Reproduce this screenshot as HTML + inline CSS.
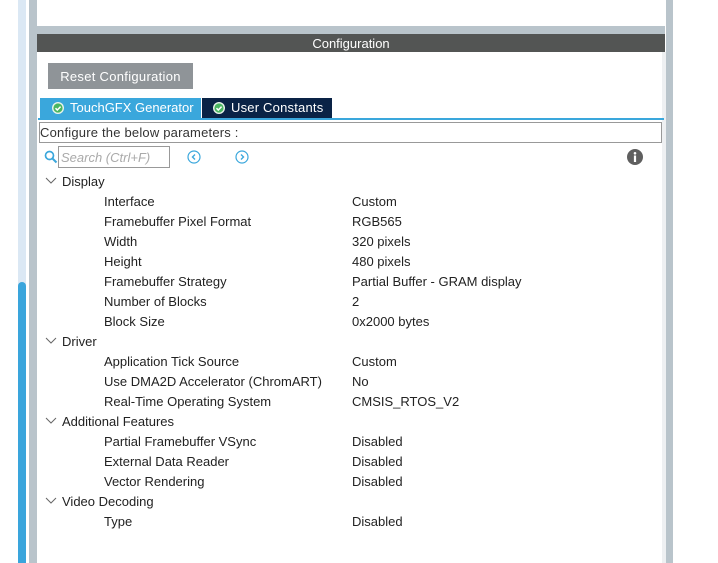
<!DOCTYPE html>
<html><head><style>
body{margin:0;width:718px;height:563px;background:#fff;position:relative;overflow:hidden;font-family:"Liberation Sans",Arial,sans-serif;font-size:13px;color:#222}
.a{position:absolute}
.row{position:absolute;left:0;width:600px;height:20px;line-height:20px}
.cat{left:62px}
.k{position:absolute;left:104px}
.v{position:absolute;left:352px}
.chev{position:absolute;left:45px;top:4px}
</style></head><body>
<div class="a" style="left:18px;top:0;width:8px;height:563px;background:#dbe8f4"></div>
<div class="a" style="left:18px;top:282px;width:8px;height:281px;background:#3aa5dc;border-radius:4px 4px 0 0"></div>
<div class="a" style="left:29px;top:0;width:8px;height:563px;background:#b9c4cb"></div>
<div class="a" style="left:37px;top:26px;width:628px;height:8px;background:#b9c4cb"></div>
<div class="a" style="left:662px;top:52px;width:4px;height:511px;background:#eef0f2"></div>
<div class="a" style="left:666px;top:0;width:7px;height:563px;background:#b9c4cb"></div>
<div class="a" style="left:37px;top:34px;width:628px;height:18px;background:#535554;color:#fff;text-align:center;line-height:19px;font-size:13px">Configuration</div>
<div class="a" style="left:48px;top:63px;width:145px;height:26px;background:#8f9498;color:#fff;text-align:center;line-height:27px;font-size:13px;letter-spacing:.3px">Reset Configuration</div>
<div class="a" style="left:40px;top:98px;width:161px;height:20px;background:#3aa7dc;color:#fff;line-height:20px;font-size:13px">
<svg class="a" style="left:12px;top:4px" width="12" height="12"><circle cx="6" cy="6" r="6" fill="#e8f4ea"/><circle cx="6" cy="6" r="4.6" fill="#49b660"/><path d="M3.5 6.2l1.8 1.8 3.3-3.4" stroke="#fff" stroke-width="1.5" fill="none"/></svg>
<span class="a" style="left:30px">TouchGFX Generator</span></div>
<div class="a" style="left:202px;top:98px;width:130px;height:20px;background:#0a2346;color:#fff;line-height:20px;font-size:13px">
<svg class="a" style="left:11px;top:4px" width="12" height="12"><circle cx="6" cy="6" r="6" fill="#e8f4ea"/><circle cx="6" cy="6" r="4.6" fill="#49b660"/><path d="M3.5 6.2l1.8 1.8 3.3-3.4" stroke="#fff" stroke-width="1.5" fill="none"/></svg>
<span class="a" style="left:29px;letter-spacing:.2px">User Constants</span></div>
<div class="a" style="left:38px;top:118px;width:626px;height:2px;background:#3aa7dc"></div>
<div class="a" style="left:39px;top:122px;width:621px;height:19px;border:1px solid #999;line-height:20px;font-size:13px;color:#333;letter-spacing:.2px">Configure the below parameters :</div>
<svg class="a" style="left:44px;top:150px" width="14" height="14"><circle cx="5.5" cy="5.5" r="4" stroke="#3aa7dc" stroke-width="1.7" fill="none"/><path d="M8.5 8.5l4 4" stroke="#3aa7dc" stroke-width="2"/></svg>
<div class="a" style="left:58px;top:146px;line-height:22px;color:#aaa;font-style:italic;font-size:13px;padding-left:2px;box-sizing:border-box;width:112px;height:22px;border:1px solid #999">Search (Ctrl+F)</div>
<svg class="a" style="left:187px;top:150px" width="14" height="14"><circle cx="7" cy="7" r="6" stroke="#3aa7dc" stroke-width="1.2" fill="none"/><path d="M8 4.5L5.5 7 8 9.5" stroke="#3aa7dc" stroke-width="1.4" fill="none"/></svg>
<svg class="a" style="left:235px;top:150px" width="14" height="14"><circle cx="7" cy="7" r="6" stroke="#3aa7dc" stroke-width="1.2" fill="none"/><path d="M6 4.5L8.5 7 6 9.5" stroke="#3aa7dc" stroke-width="1.4" fill="none"/></svg>
<svg class="a" style="left:627px;top:149px" width="16" height="16"><circle cx="8" cy="8" r="8" fill="#5f5f5f"/><circle cx="8" cy="4.3" r="1.3" fill="#fff"/><rect x="6.9" y="6.5" width="2.2" height="6.5" fill="#fff"/></svg>
<div class="a" style="left:0;top:172px;width:660px">
<div class="row" style="top:0"><svg class="chev" width="12" height="10"><path d="M1 2l5 5 5-5" stroke="#666" fill="none"/></svg><span class="a cat">Display</span></div>
<div class="row" style="top:20px"><span class="k">Interface</span><span class="v">Custom</span></div>
<div class="row" style="top:40px"><span class="k">Framebuffer Pixel Format</span><span class="v">RGB565</span></div>
<div class="row" style="top:60px"><span class="k">Width</span><span class="v">320 pixels</span></div>
<div class="row" style="top:80px"><span class="k">Height</span><span class="v">480 pixels</span></div>
<div class="row" style="top:100px"><span class="k">Framebuffer Strategy</span><span class="v">Partial Buffer - GRAM display</span></div>
<div class="row" style="top:120px"><span class="k">Number of Blocks</span><span class="v">2</span></div>
<div class="row" style="top:140px"><span class="k">Block Size</span><span class="v">0x2000 bytes</span></div>
<div class="row" style="top:160px"><svg class="chev" width="12" height="10"><path d="M1 2l5 5 5-5" stroke="#666" fill="none"/></svg><span class="a cat">Driver</span></div>
<div class="row" style="top:180px"><span class="k">Application Tick Source</span><span class="v">Custom</span></div>
<div class="row" style="top:200px"><span class="k">Use DMA2D Accelerator (ChromART)</span><span class="v">No</span></div>
<div class="row" style="top:220px"><span class="k">Real-Time Operating System</span><span class="v">CMSIS_RTOS_V2</span></div>
<div class="row" style="top:240px"><svg class="chev" width="12" height="10"><path d="M1 2l5 5 5-5" stroke="#666" fill="none"/></svg><span class="a cat">Additional Features</span></div>
<div class="row" style="top:260px"><span class="k">Partial Framebuffer VSync</span><span class="v">Disabled</span></div>
<div class="row" style="top:280px"><span class="k">External Data Reader</span><span class="v">Disabled</span></div>
<div class="row" style="top:300px"><span class="k">Vector Rendering</span><span class="v">Disabled</span></div>
<div class="row" style="top:320px"><svg class="chev" width="12" height="10"><path d="M1 2l5 5 5-5" stroke="#666" fill="none"/></svg><span class="a cat">Video Decoding</span></div>
<div class="row" style="top:340px"><span class="k">Type</span><span class="v">Disabled</span></div>
</div>
</body></html>
